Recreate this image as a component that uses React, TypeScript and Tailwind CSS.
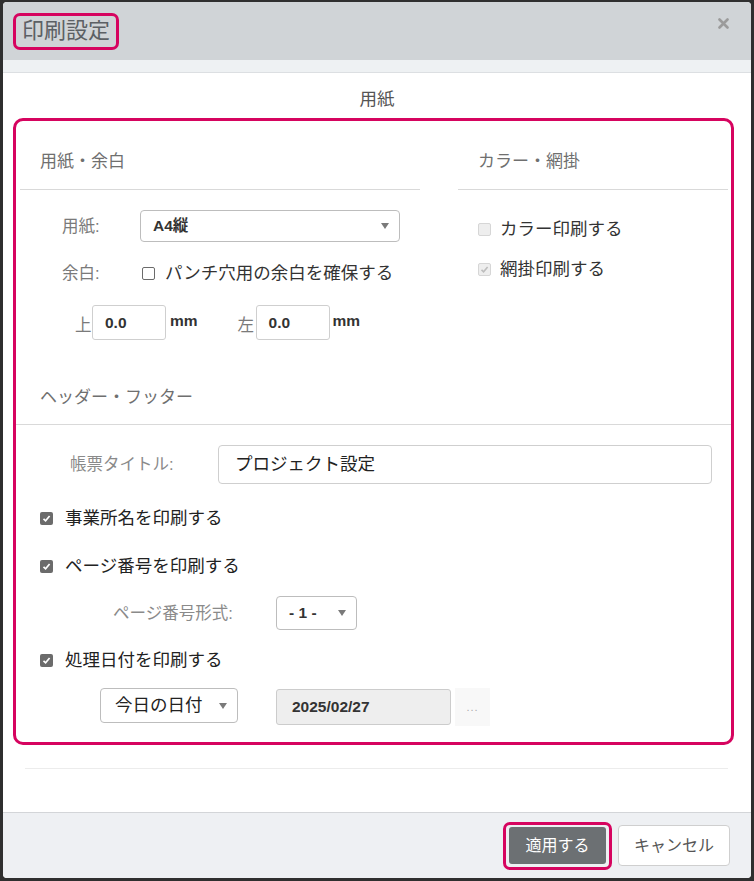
import React from "react";

function Caret() {
  return (
    <svg width="8" height="6" viewBox="0 0 8 6" className="shrink-0">
      <path d="M0 0 L8 0 L4 6 Z" fill="#7a7a7a" />
    </svg>
  );
}

function Check({ checked, disabled }: { checked?: boolean; disabled?: boolean }) {
  if (disabled) {
    return (
      <span className="w-[13px] h-[13px] shrink-0 rounded-[2px] border border-[#d6d6d6] bg-[#eeeeee] flex items-center justify-center">
        {checked && (
          <svg width="9" height="9" viewBox="0 0 9 9">
            <path d="M1.5 4.8 L3.6 6.8 L7.6 2" fill="none" stroke="#bdbdbd" strokeWidth="1.6" />
          </svg>
        )}
      </span>
    );
  }
  if (checked) {
    return (
      <span className="w-[13px] h-[13px] shrink-0 rounded-[2px] bg-[#6b6b6b] flex items-center justify-center">
        <svg width="9" height="9" viewBox="0 0 9 9">
          <path d="M1.5 4.8 L3.6 6.8 L7.6 2" fill="none" stroke="#ffffff" strokeWidth="1.7" />
        </svg>
      </span>
    );
  }
  return <span className="w-[13px] h-[13px] shrink-0 rounded-[2px] border border-[#6b6b6b] bg-white" />;
}

export default function App() {
  return (
    <div className="w-[754px] h-[881px] bg-[#2f2f2f] pt-[2px] pl-[3px] font-['Liberation_Sans','Noto_Sans_CJK_JP',sans-serif]">
      <div className="w-[748px] h-[876px] bg-white rounded-[4px] overflow-hidden flex flex-col">
        {/* header */}
        <div className="h-[58px] shrink-0 bg-[#d0d4d7] flex items-center justify-between pl-[10px] pr-[22px]">
          <div className="h-[37px] px-[6px] border-[3px] border-[#d6045f] rounded-[7px] flex items-center">
            <span className="text-[22px] leading-none text-[#5c6064]">印刷設定</span>
          </div>
          <svg width="11" height="11" viewBox="0 0 11 11" className="-mt-[16px]">
            <path d="M1.5 1.5 L9.5 9.5 M9.5 1.5 L1.5 9.5" stroke="#9b9b9b" strokeWidth="2.6" strokeLinecap="round" />
          </svg>
        </div>
        <div className="h-[13px] shrink-0 bg-[#eef1f3] border-b border-[#dcdfe2]" />

        {/* body */}
        <div className="flex-1 flex flex-col">
          <div className="h-[45px] pt-[15px] text-center text-[17.5px] leading-[22px] text-[#555]">用紙</div>
          <div className="ml-[10px] w-[721px] h-[627px] border-[3px] border-[#d6045f] rounded-[10px] flex flex-col pb-[16px]">
            {/* top section */}
            <div className="flex pl-[4px]">
              <div className="w-[400px] flex flex-col">
                <div className="h-[69px] pt-[29px] pl-[20px] text-[17px] leading-[24px] text-[#6f6f6f] border-b border-[#d9d9d9]">
                  用紙・余白
                </div>
                <div className="mt-[20px] h-[32px] flex items-center">
                  <span className="w-[120px] pl-[42px] text-[16.5px] text-[#7a7a7a]">用紙:</span>
                  <div className="w-[260px] h-[32px] border border-[#bdbdbd] rounded-[4px] flex items-center justify-between pl-[12px] pr-[10px]">
                    <span className="text-[15.5px] font-semibold text-[#333]">A4縦</span>
                    <Caret />
                  </div>
                </div>
                <div className="mt-[20px] h-[22px] flex items-center">
                  <span className="w-[122px] pl-[42px] text-[16.5px] text-[#7a7a7a]">余白:</span>
                  <Check />
                  <span className="ml-[10px] text-[17.5px] text-[#333]">パンチ穴用の余白を確保する</span>
                </div>
                <div className="mt-[21px] h-[35px] flex items-center pl-[55px]">
                  <span className="w-[17px] text-[16.5px] text-[#7a7a7a] pt-[6px]">上</span>
                  <div className="w-[74px] h-[35px] border border-[#cfcfcf] rounded-[3px] flex items-center pl-[12px]">
                    <span className="text-[15.5px] font-semibold text-[#333]">0.0</span>
                  </div>
                  <span className="ml-[4px] -mt-[4px] text-[15.5px] font-semibold text-[#333]">mm</span>
                  <span className="ml-[40px] w-[18px] text-[16.5px] text-[#7a7a7a] pt-[6px]">左</span>
                  <div className="w-[74px] h-[35px] border border-[#cfcfcf] rounded-[3px] flex items-center pl-[12px]">
                    <span className="text-[15.5px] font-semibold text-[#333]">0.0</span>
                  </div>
                  <span className="ml-[3px] -mt-[4px] text-[15.5px] font-semibold text-[#333]">mm</span>
                </div>
              </div>
              <div className="ml-[38px] w-[270px] flex flex-col">
                <div className="h-[69px] pt-[29px] pl-[20px] text-[17px] leading-[24px] text-[#6f6f6f] border-b border-[#d9d9d9]">
                  カラー・網掛
                </div>
                <div className="mt-[28px] h-[22px] flex items-center pl-[20px]">
                  <Check disabled />
                  <span className="ml-[9px] text-[17.5px] text-[#333]">カラー印刷する</span>
                </div>
                <div className="mt-[18px] h-[22px] flex items-center pl-[20px]">
                  <Check disabled checked />
                  <span className="ml-[9px] text-[17.5px] text-[#333]">網掛印刷する</span>
                </div>
              </div>
            </div>

            {/* header / footer section */}
            <div className="mt-[46px] h-[39px] pl-[24px] text-[17px] leading-[24px] text-[#6f6f6f] border-b border-[#d9d9d9]">
              ヘッダー・フッター
            </div>
            <div className="mt-[20px] h-[39px] flex items-center">
              <span className="w-[202px] pl-[54px] text-[16.5px] text-[#8a8a8a]">帳票タイトル:</span>
              <div className="w-[494px] h-[39px] border border-[#cfcfcf] rounded-[4px] flex items-center pl-[16px]">
                <span className="text-[17.5px] text-[#222]">プロジェクト設定</span>
              </div>
            </div>
            <div className="mt-[22px] h-[24px] flex items-center pl-[24px]">
              <Check checked />
              <span className="ml-[12px] text-[17.5px] text-[#222]">事業所名を印刷する</span>
            </div>
            <div className="mt-[24px] h-[24px] flex items-center pl-[24px]">
              <Check checked />
              <span className="ml-[12px] text-[17.5px] text-[#222]">ページ番号を印刷する</span>
            </div>
            <div className="mt-[18px] h-[34px] flex items-center">
              <span className="w-[260px] pl-[97px] text-[16.5px] text-[#8a8a8a]">ページ番号形式:</span>
              <div className="w-[81px] h-[34px] border border-[#bdbdbd] rounded-[4px] flex items-center justify-between pl-[12px] pr-[10px]">
                <span className="text-[15.5px] font-semibold text-[#333]">- 1 -</span>
                <Caret />
              </div>
            </div>
            <div className="mt-[18px] h-[24px] flex items-center pl-[24px]">
              <Check checked />
              <span className="ml-[12px] text-[17.5px] text-[#222]">処理日付を印刷する</span>
            </div>
            <div className="mt-[16px] h-[38px] flex items-center pl-[84px]">
              <div className="w-[138px] h-[35px] -mt-[3px] border border-[#bdbdbd] rounded-[4px] flex items-center justify-between pl-[14px] pr-[10px]">
                <span className="text-[17.5px] text-[#222]">今日の日付</span>
                <Caret />
              </div>
              <div className="ml-[38px] w-[175px] h-[36px] bg-[#eeeeee] border border-[#cccccc] rounded-[3px] flex items-center pl-[15px]">
                <span className="text-[15.5px] font-semibold text-[#333]">2025/02/27</span>
              </div>
              <div className="ml-[4px] w-[35px] h-[38px] bg-[#f8f8f8] flex items-center justify-center">
                <span className="text-[11px] text-[#aaa] tracking-[1px]">...</span>
              </div>
            </div>
          </div>
          <div className="mt-[23px] ml-[22px] w-[703px] border-t border-[#ececec]" />
        </div>

        {/* footer */}
        <div className="h-[66px] shrink-0 bg-[#eef0f3] border-t border-[#d3d5d8] flex items-center justify-end pr-[21px]">
          <div className="w-[109px] h-[48px] border-[3px] border-[#d6045f] rounded-[7px] flex items-center justify-center">
            <div className="w-[97px] h-[37px] bg-[#6c7073] rounded-[3px] flex items-center justify-center">
              <span className="text-[16px] text-white">適用する</span>
            </div>
          </div>
          <div className="ml-[6px] w-[112px] h-[41px] bg-white border border-[#cfcfcf] rounded-[4px] flex items-center justify-center">
            <span className="text-[16px] text-[#555]">キャンセル</span>
          </div>
        </div>
      </div>
    </div>
  );
}
